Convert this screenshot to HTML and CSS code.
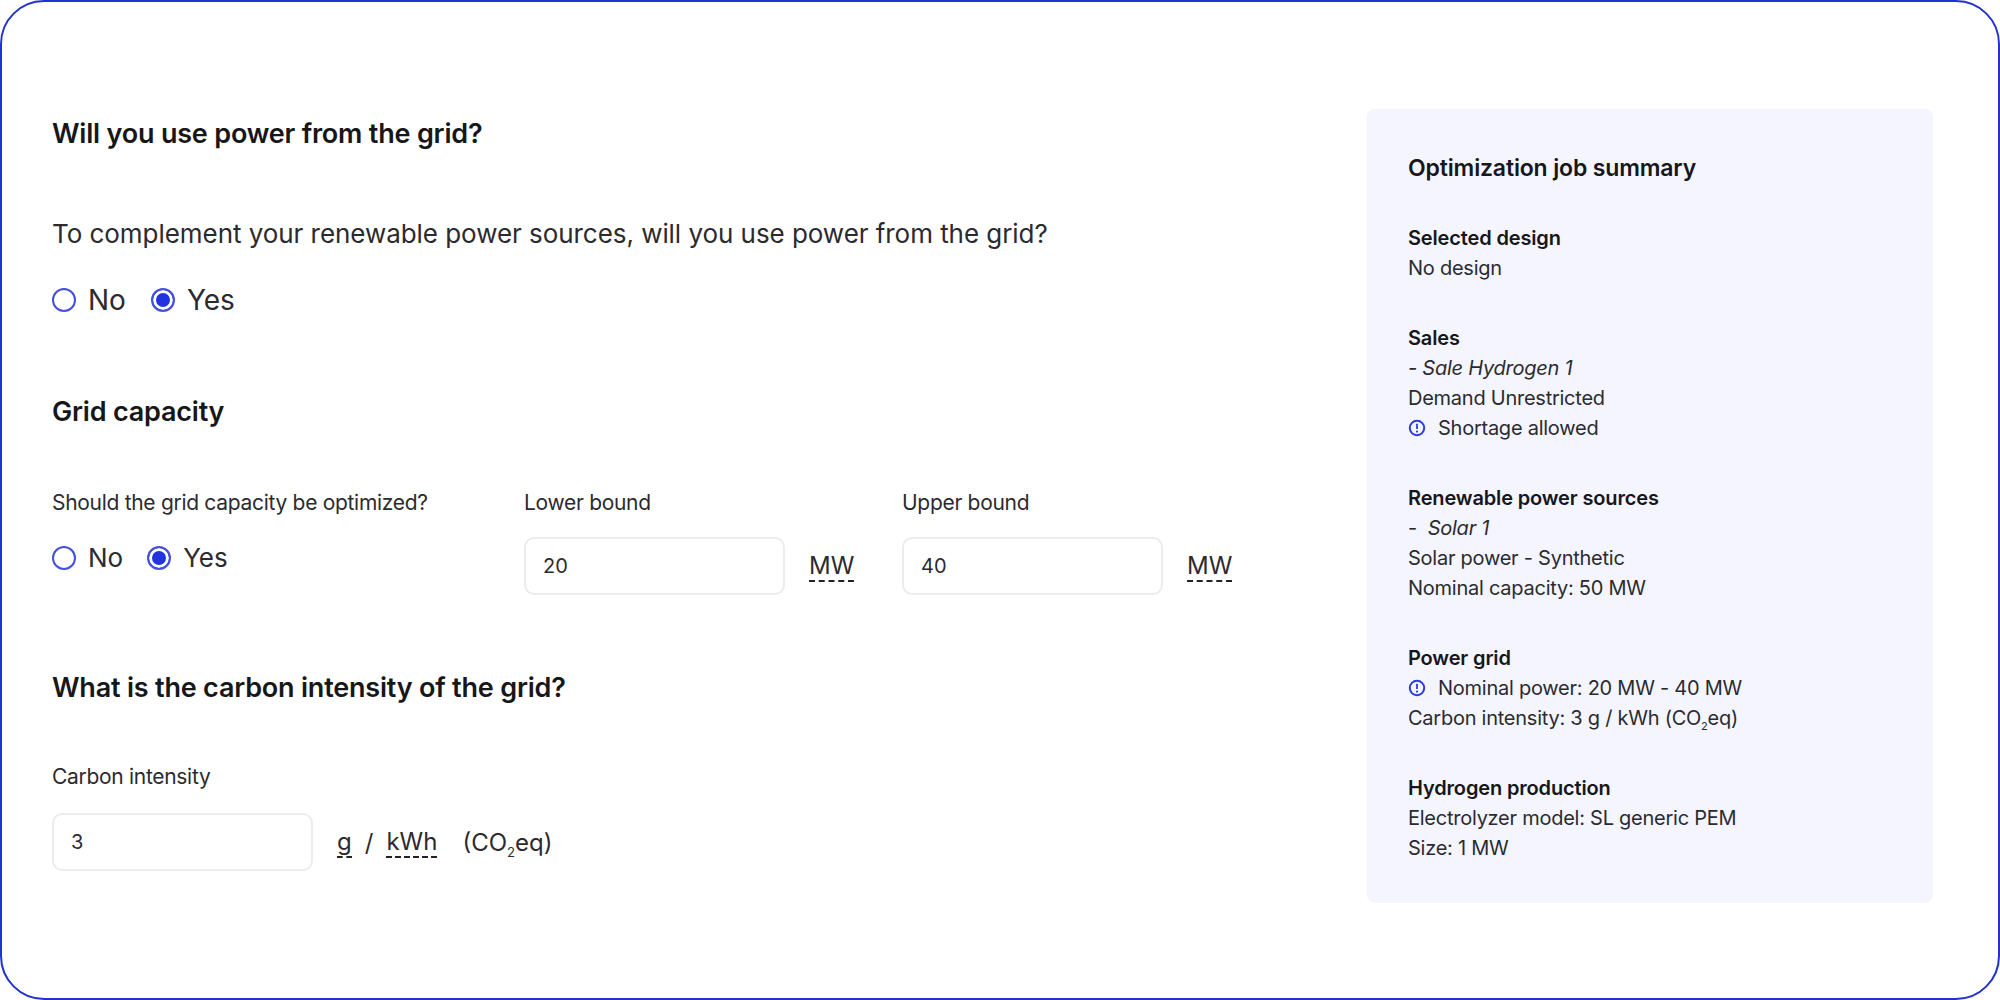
FILE: index.html
```html
<!DOCTYPE html>
<html lang="en">
<head>
<meta charset="utf-8">
<title>Optimization job</title>
<link rel="stylesheet" href="styles.css">
</head>
<body>
<div class="frame">
  <main class="form">
    <h2 class="title first">Will you use power from the grid?</h2>
    <p class="question">To complement your renewable power sources, will you use power from the grid?</p>
    <div class="radios large">
      <label class="radio"><span class="dot"></span>No</label>
      <label class="radio"><span class="dot on"></span>Yes</label>
    </div>

    <h2 class="title capacity">Grid capacity</h2>
    <div class="fields">
      <div class="field opt">
        <div class="label">Should the grid capacity be optimized?</div>
        <div class="radios">
          <label class="radio"><span class="dot"></span>No</label>
          <label class="radio"><span class="dot on"></span>Yes</label>
        </div>
      </div>
      <div class="field bound">
        <div class="label">Lower bound</div>
        <div class="with-unit">
          <input class="input" type="text" value="20" readonly>
          <span class="unit"><span class="dash">MW</span></span>
        </div>
      </div>
      <div class="field bound">
        <div class="label">Upper bound</div>
        <div class="with-unit">
          <input class="input" type="text" value="40" readonly>
          <span class="unit"><span class="dash">MW</span></span>
        </div>
      </div>
    </div>

    <h2 class="title carbon">What is the carbon intensity of the grid?</h2>
    <div class="label carbon-label">Carbon intensity</div>
    <div class="with-unit carbon-row">
      <input class="input" type="text" value="3" readonly>
      <span class="unit compound"><span class="dash">g</span><span class="slash">/</span><span class="dash">kWh</span><span class="eq">(CO<sub>2</sub>eq)</span></span>
    </div>
  </main>

  <aside class="summary">
    <h3 class="summary-title">Optimization job summary</h3>
    <section class="group">
      <h4>Selected design</h4>
      <div>No design</div>
    </section>
    <section class="group">
      <h4>Sales</h4>
      <div><em>- Sale Hydrogen 1</em></div>
      <div>Demand Unrestricted</div>
      <div class="info"><svg class="icon" viewBox="0 0 18 18"><circle cx="9" cy="9" r="7.2" fill="none" stroke="#2a3be0" stroke-width="2"/><path d="M9 4.8v5.2" stroke="#2a3be0" stroke-width="1.8" fill="none"/><circle cx="9" cy="12.6" r="1.1" fill="#2a3be0"/></svg>Shortage allowed</div>
    </section>
    <section class="group">
      <h4>Renewable power sources</h4>
      <div>-&nbsp; <em>Solar 1</em></div>
      <div>Solar power - Synthetic</div>
      <div>Nominal capacity: 50 MW</div>
    </section>
    <section class="group">
      <h4>Power grid</h4>
      <div class="info"><svg class="icon" viewBox="0 0 18 18"><circle cx="9" cy="9" r="7.2" fill="none" stroke="#2a3be0" stroke-width="2"/><path d="M9 4.8v5.2" stroke="#2a3be0" stroke-width="1.8" fill="none"/><circle cx="9" cy="12.6" r="1.1" fill="#2a3be0"/></svg>Nominal power: 20 MW - 40 MW</div>
      <div>Carbon intensity: 3 g / kWh (CO<sub>2</sub>eq)</div>
    </section>
    <section class="group">
      <h4>Hydrogen production</h4>
      <div>Electrolyzer model: SL generic PEM</div>
      <div>Size: 1 MW</div>
    </section>
  </aside>
</div>
</body>
</html>
```
FILE: styles.css
```css
* { box-sizing: border-box; }
html, body { margin: 0; padding: 0; background: #fff; }
body {
  font-family: Inter, "Liberation Sans", sans-serif;
  color: #2b2b2f;
}
.frame {
  width: 2000px;
  height: 1000px;
  border: 2px solid #2233cc;
  border-radius: 44px;
  display: flex;
  padding: 107px 65px 0 50px;
  justify-content: space-between;
  overflow: hidden;
}
.form { width: 1260px; flex: none; }
.title {
  margin: 0;
  font-size: 27px;
  line-height: 30px;
  font-weight: 600;
  letter-spacing: -0.2px;
  color: #17171a;
}
.first { margin-top: 10px; }
.capacity { margin-top: 82px; }
.carbon { margin-top: 78px; }
.question {
  margin: 70px 0 0;
  font-size: 26px;
  line-height: 30px;
  letter-spacing: -0.05px;
}
.radios {
  display: flex;
  gap: 24px;
  margin-top: 25px;
  font-size: 26px;
  line-height: 30px;
}
.radios.large { margin-top: 36px; font-size: 28px; gap: 25px; }
.radio { display: flex; align-items: center; gap: 12px; }
.dot {
  width: 24px;
  height: 24px;
  border-radius: 50%;
  border: 2px solid #4250dc;
  background: #fff;
  flex: none;
}
.dot.on {
  background: #2233e0;
  box-shadow: inset 0 0 0 3px #fff;
}
.fields { display: flex; margin-top: 60px; height: 108px; }
.field { flex: none; }
.field.opt { width: 472px; }
.field.bound { width: 378px; }
.label {
  font-size: 21px;
  line-height: 30px;
  letter-spacing: -0.3px;
}
.field .label { padding-top: 1px; line-height: 30px; }
.with-unit { display: flex; align-items: center; margin-top: 19px; }
.carbon-row { margin-top: 21px; }
.input {
  width: 261px;
  height: 58px;
  padding: 0 17px;
  border: 2px solid #ececf0;
  border-radius: 10px;
  font: 20px Inter, "Liberation Sans", sans-serif;
  color: #2b2b2f;
  background: #fff;
  outline: none;
}
.unit { margin-left: 24px; font-size: 24px; line-height: 28px; padding-top: 1px; }
.dash { display: inline-block; border-bottom: 2px dashed #222; line-height: 28px; }
.compound { display: flex; align-items: center; }
.slash { margin: 0 13px; }
.eq { margin-left: 25px; }
sub { font-size: 0.55em; line-height: 0; }
.carbon-label { margin-top: 59px; }
.summary {
  width: 566px;
  height: 794px;
  padding: 44px 40px 0 41px;
  background: #f4f5ff;
  border-radius: 8px;
  font-size: 20px;
  line-height: 30px;
  letter-spacing: -0.25px;
  flex: none;
}
.summary-title {
  margin: 0 0 40px;
  font-size: 23px;
  line-height: 30px;
  font-weight: 600;
  letter-spacing: -0.15px;
  color: #17171a;
}
.group { margin-bottom: 40px; }
.group h4 {
  margin: 0;
  font-size: 20px;
  line-height: 30px;
  font-weight: 600;
  letter-spacing: -0.15px;
  color: #17171a;
}
.info { display: flex; align-items: center; }
.icon { width: 18px; height: 18px; margin-right: 12px; flex: none; }
```
